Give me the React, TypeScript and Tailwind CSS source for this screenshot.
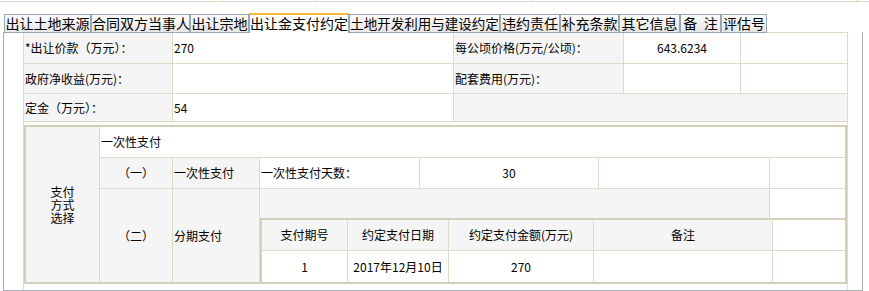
import React from "react";

const tabs: { label: string; w: number; active?: boolean; cls?: string }[] = [
  { label: "出让土地来源", w: 87 },
  { label: "合同双方当事人", w: 99 },
  { label: "出让宗地", w: 59 },
  { label: "出让金支付约定", w: 100, active: true },
  { label: "土地开发利用与建设约定", w: 151, cls: "text-[13.5px]" },
  { label: "违约责任", w: 60 },
  { label: "补充条款", w: 59 },
  { label: "其它信息", w: 61 },
  { label: "备\u00a0\u00a0注", w: 41 },
  { label: "评估号", w: 46 },
];

const gray = "bg-[#f5f5f5]";
const cell = "flex items-center bg-white";
const gcell = `flex items-center ${gray}`;

export default function App() {
  return (
    <div className="w-[869px] h-[291px] bg-white overflow-hidden text-black font-['Noto_Sans_CJK_SC',sans-serif] text-[12px]">
      {/* top strip remnants */}
      <div className="flex h-[2px] border-b border-[#dcdac8]">
        <div className="w-[223px] h-px border-r border-[#dcdac8]" />
        <div className="w-[93px] h-px border-r border-[#dcdac8]" />
        <div className="w-[216px] h-px border-r border-[#dcdac8]" />
        <div className="w-[325px] h-px border-r border-[#dcdac8]" />
      </div>

      {/* tabs */}
      <div className="relative z-10 ml-[4px] mt-[11px] flex items-end h-[20px]">
        {tabs.map((t) =>
          t.active ? (
            <div
              key={t.label}
              style={{ width: t.w }}
              className="h-[20px] border-x border-x-[#98a5b3] border-t-2 border-t-[#f5b73b] bg-white text-[14px] leading-[17px] text-center whitespace-nowrap"
            >
              {t.label}
            </div>
          ) : (
            <div
              key={t.label}
              style={{ width: t.w }}
              className={`h-[19px] border border-[#98a5b3] bg-linear-to-b from-[#fdfdfd] to-[#e6e6e6] leading-[17px] text-center whitespace-nowrap ${t.cls ?? "text-[14px]"}`}
            >
              {t.label}
            </div>
          )
        )}
      </div>

      {/* panel */}
      <div className="relative -mt-px ml-[3px] w-[860px] h-[259px] border-x border-b border-[#a9adbb] overflow-hidden">
        <div className="ml-[19px] w-[825px] grid grid-cols-[148px_280px_169px_116px_106px] grid-rows-[30px_29px_27px_auto] gap-px bg-[#dcdac8] p-px">
          <div className={`${gcell} pl-px`}>*出让价款（万元）：</div>
          <div className={`${cell} pl-px`}>270</div>
          <div className={`${gcell} pl-px`}>每公顷价格(万元/公顷)：</div>
          <div className={`${cell} justify-center`}>643.6234</div>
          <div className={cell} />

          <div className={`${gcell} pl-px`}>政府净收益(万元)：</div>
          <div className={cell} />
          <div className={`${gcell} pl-px`}>配套费用(万元)：</div>
          <div className={cell} />
          <div className={cell} />

          <div className={`${gcell} pl-px`}>定金（万元）：</div>
          <div className={`${cell} pl-px`}>54</div>
          <div className={`${gcell} col-span-3`} />

          <div className="col-span-5 bg-white pt-[3px] pb-[12px]">
            <div className="grid grid-cols-[73px_72px_86px_159px_178px_170px_75px] grid-rows-[30px_30px_93px] gap-px bg-[#dcdac8] border-2 border-[#d3cfba]">
              <div className={`${gray} row-span-3 flex items-center justify-center text-center leading-[13px]`}>
                <div>
                  支付
                  <br />
                  方式
                  <br />
                  选择
                </div>
              </div>
              <div className={`${cell} col-span-6 pl-px`}>一次性支付</div>

              <div className={`${gcell} justify-center`}>（一）</div>
              <div className={`${gcell} pl-px`}>一次性支付</div>
              <div className={`${cell} pl-px`}>一次性支付天数：</div>
              <div className={`${cell} justify-center`}>30</div>
              <div className={cell} />
              <div className={cell} />

              <div className={`${gcell} justify-center`}>（二）</div>
              <div className={`${gcell} pl-px`}>分期支付</div>
              <div className="col-span-4 bg-white flex flex-col">
                <div className="flex h-[29px]">
                  <div className={`w-[509px] ${gray}`} />
                  <div className="w-px bg-[#dcdac8]" />
                  <div className="flex-1 bg-white" />
                </div>
                <div className="grid grid-cols-[85px_100px_144px_178px_72px] grid-rows-[30px_31px] gap-px bg-[#dcdac8] border-t-2 border-l-2 border-[#d3cfba]">
                  <div className={`${gcell} justify-center`}>支付期号</div>
                  <div className={`${gcell} justify-center`}>约定支付日期</div>
                  <div className={`${gcell} justify-center`}>约定支付金额(万元)</div>
                  <div className={`${gcell} justify-center`}>备注</div>
                  <div className={cell} />

                  <div className={`${cell} justify-center`}>1</div>
                  <div className={`${cell} justify-center`}>2017年12月10日</div>
                  <div className={`${cell} justify-center`}>270</div>
                  <div className={cell} />
                  <div className={cell} />
                </div>
              </div>
            </div>
          </div>
        </div>
      </div>
    </div>
  );
}
